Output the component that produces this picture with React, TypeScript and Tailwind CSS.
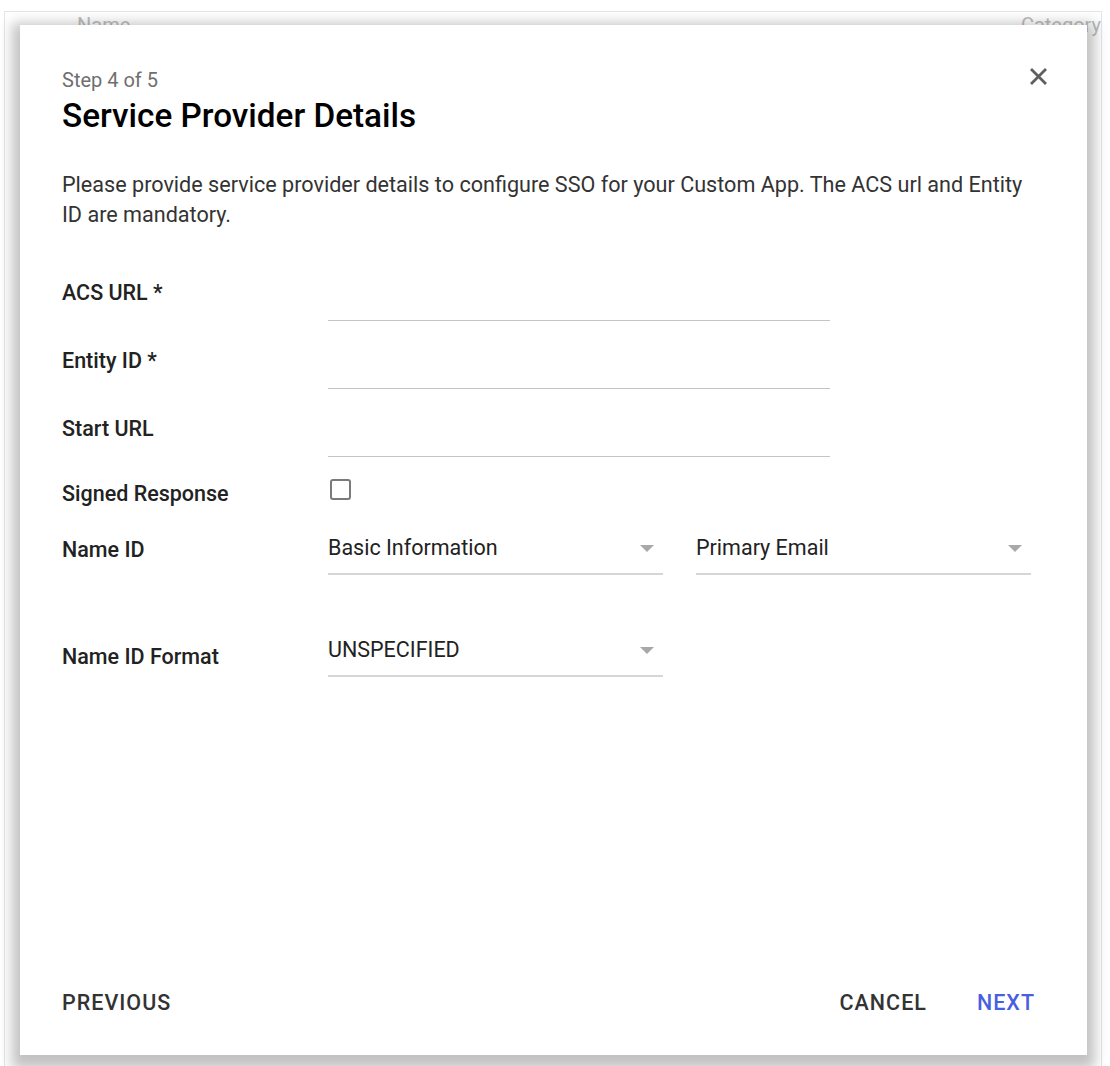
const font = { fontFamily: "Roboto, 'Liberation Sans', sans-serif" };

function TextField() {
  return <div className="h-[42px] w-[502px] border-b border-[#c4c4c4]" />;
}

function Select({ value, width }: { value: string; width: string }) {
  return (
    <div className={`flex h-[41px] items-start justify-between border-b-2 border-[#d6d6d6] ${width}`}>
      <span className="text-[21.5px] leading-[28px] text-[#222]">{value}</span>
      <span className="mr-[9px] mt-[11px] h-0 w-0 border-x-[7px] border-t-[7px] border-x-transparent border-t-[#a8a8a8]" />
    </div>
  );
}

function Row({ label, children, className = "" }: { label: string; children: React.ReactNode; className?: string }) {
  return (
    <div className={`flex items-start ${className}`}>
      <div className="w-[266px] shrink-0 text-[21.5px] font-medium leading-[28px] text-[#222]">{label}</div>
      {children}
    </div>
  );
}

export default function App() {
  return (
    <div className="relative h-[1066px] w-[1110px] overflow-hidden bg-white" style={font}>
      {/* page behind the dialog */}
      <div className="pt-[11px] pl-[4px] pr-[8px]">
        <div className="h-[1060px] overflow-hidden border-x border-t border-[#e4e4ec]">
          <div className="flex pt-[1px] pl-[72px] text-[20px] leading-[24px] text-[#bdbdbd]">
            <span>Name ▲</span>
            <span className="ml-[882px] whitespace-nowrap">Category</span>
          </div>
        </div>
      </div>

      {/* dialog */}
      <div className="absolute left-[20px] top-[25px] flex h-[1030px] w-[1067px] flex-col bg-white pl-[42px] pr-[40px] pt-[43px] pb-[38px] shadow-[0_6px_12px_8px_rgba(0,0,0,0.24)]">
        <div className="flex items-start justify-between">
          <div>
            <div className="text-[20px] leading-[24px] text-[#6f6f6f]">Step 4 of 5</div>
            <div className="mt-[4px] text-[33.3px] font-medium leading-[40px] text-black">Service Provider Details</div>
          </div>
          <button className="text-[#5f5f5f]">
            <svg width="17" height="17" viewBox="0 0 17 17" className="block">
              <path d="M2 2L15 15M15 2L2 15" stroke="currentColor" strokeWidth="2.8" strokeLinecap="square" />
            </svg>
          </button>
        </div>

        <p className="mt-[34px] text-[21.6px] leading-[30px] text-[#333]">
          Please provide service provider details to configure SSO for your Custom App. The ACS url and Entity ID are
          mandatory.
        </p>

        <div className="mt-[49px] flex flex-col">
          <Row label="ACS URL *">
            <TextField />
          </Row>
          <Row label="Entity ID *" className="mt-[26px]">
            <TextField />
          </Row>
          <Row label="Start URL" className="mt-[26px]">
            <TextField />
          </Row>
          <Row label="Signed Response" className="mt-[23px]">
            <div className="ml-[2px] mt-[-1px] h-[21px] w-[21px] rounded-[3px] border-2 border-[#7a7a7a]" />
          </Row>
          <Row label="Name ID" className="mt-[28px]">
            <div className="mt-[-2px] flex gap-[33px]">
              <Select value="Basic Information" width="w-[335px]" />
              <Select value="Primary Email" width="w-[335px]" />
            </div>
          </Row>
          <Row label="Name ID Format" className="mt-[68px]">
            <div className="mt-[-7px]">
              <Select value="UNSPECIFIED" width="w-[335px]" />
            </div>
          </Row>
        </div>

        <div className="mt-auto flex items-center justify-between text-[21.5px] font-medium leading-[28px] tracking-[1px]">
          <button className="text-[#333]">PREVIOUS</button>
          <div className="flex gap-[50px]">
            <button className="text-[#333]">CANCEL</button>
            <button className="mr-[12px] text-[#4a5fe0]">NEXT</button>
          </div>
        </div>
      </div>
    </div>
  );
}
